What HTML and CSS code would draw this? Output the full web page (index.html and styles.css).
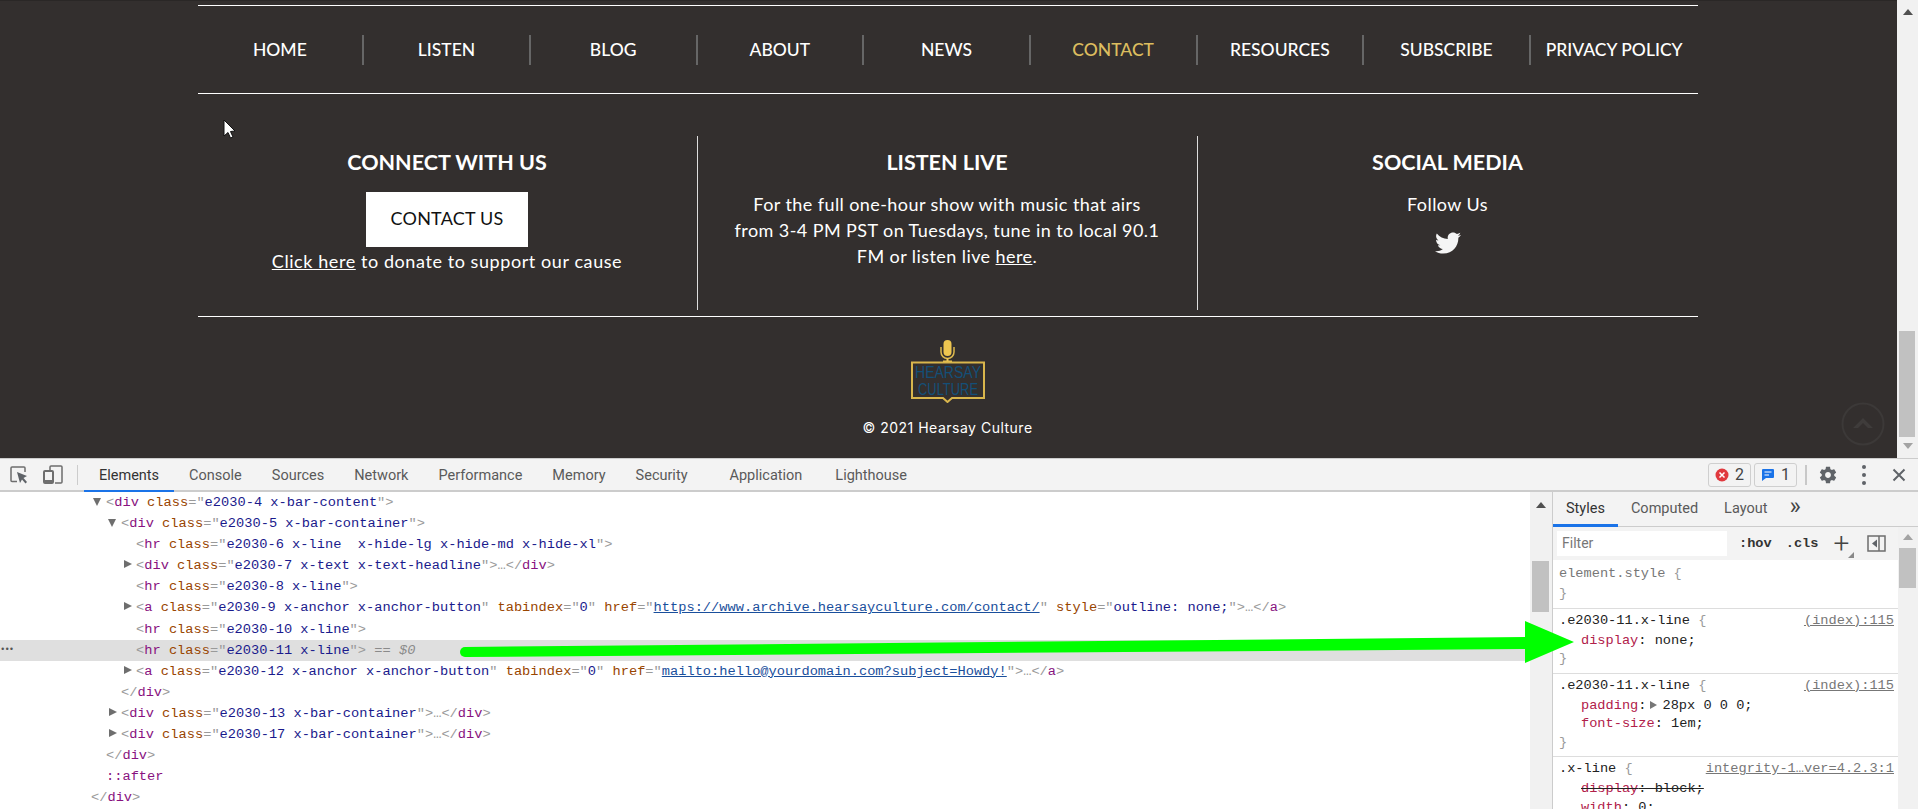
FILE: index.html
```html
<!DOCTYPE html>
<html lang="en">
<head>
    <meta charset="UTF-8">
    <meta name="viewport" content="width=device-width, initial-scale=1.0">
    <title>Hearsay Culture</title>
    <link rel="stylesheet" href="styles.css">
</head>
<body>

    <!-- Page viewport -->
    <div class="viewport">
        <div class="page">
            <footer class="footer">
                <nav class="nav">
                    <a class="nav-item">HOME</a>
                    <a class="nav-item">LISTEN</a>
                    <a class="nav-item">BLOG</a>
                    <a class="nav-item">ABOUT</a>
                    <a class="nav-item">NEWS</a>
                    <a class="nav-item active">CONTACT</a>
                    <a class="nav-item">RESOURCES</a>
                    <a class="nav-item">SUBSCRIBE</a>
                    <a class="nav-item">PRIVACY POLICY</a>
                </nav>

                <div class="columns">
                    <div class="column">
                        <h3>CONNECT WITH US</h3>
                        <a class="contact-btn">CONTACT US</a>
                        <p><u>Click here</u> to donate to support our cause</p>
                    </div>
                    <div class="column">
                        <h3>LISTEN LIVE</h3>
                        <p>For the full one-hour show with music that airs<br>from 3-4 PM PST on Tuesdays, tune in to local 90.1<br>FM or listen live <u>here</u>.</p>
                    </div>
                    <div class="column">
                        <h3>SOCIAL MEDIA</h3>
                        <p>Follow Us</p>
                        <svg class="twitter" viewBox="0 0 512 512"><path fill="#f5f5f5" d="M459.37 151.716c.325 4.548.325 9.097.325 13.645 0 138.72-105.583 298.558-298.558 298.558-59.452 0-114.68-17.219-161.137-47.106 8.447.974 16.568 1.299 25.34 1.299 49.055 0 94.213-16.568 130.274-44.832-46.132-.975-84.792-31.188-98.112-72.772 6.498.974 12.995 1.624 19.818 1.624 9.421 0 18.843-1.3 27.614-3.573-48.081-9.747-84.143-51.98-84.143-102.985v-1.299c13.969 7.797 30.214 12.67 47.431 13.319-28.264-18.843-46.781-51.005-46.781-87.391 0-19.492 5.197-37.36 14.294-52.954 51.655 63.675 129.3 105.258 216.365 109.807-1.624-7.797-2.599-15.918-2.599-24.04 0-57.828 46.782-104.934 104.934-104.934 30.213 0 57.502 12.67 76.67 33.137 23.715-4.548 46.456-13.32 66.599-25.34-7.798 24.366-24.366 44.833-46.132 57.827 21.117-2.273 41.584-8.122 60.426-16.243-14.292 20.791-32.161 39.308-52.628 54.253z"/></svg>
                    </div>
                </div>

                <div class="brand">
                    <svg class="logo" width="76" height="64" viewBox="0 0 76 64">
                        <rect x="33.500" y="1" width="8" height="16" rx="4" fill="#eec650"/>
                        <path d="M31 8 v5 a6.500 6.500 0 0 0 13 0 v-5" fill="none" stroke="#dcb84e" stroke-width="1.500"/>
                        <path d="M37.500 19 v3 M33 22.500 h9" stroke="#eec650" stroke-width="2"/>
                        <path d="M2 23.500 H74 V59 H42 L37.500 63 L33 59 H2 Z" fill="none" stroke="#d9b64c" stroke-width="2"/>
                        <text x="5" y="39" class="logo-text" textLength="66" lengthAdjust="spacingAndGlyphs">HEARSAY</text>
                        <text x="8" y="56" class="logo-text" textLength="60" lengthAdjust="spacingAndGlyphs">CULTURE</text>
                    </svg>
                    <div class="copyright">© 2021 Hearsay Culture</div>
                </div>
            </footer>
        </div>

        <div class="scrollbar page-scroll">
            <span class="arrow-up"></span>
            <span class="thumb"></span>
            <span class="arrow-down"></span>
        </div>

        <!-- Back to top button sits over the footer -->
        <svg class="back-top" width="44" height="44" viewBox="0 0 44 44">
            <circle cx="22" cy="22" r="20.500" fill="none" stroke="#3c3938" stroke-width="2"/>
            <path d="M12 26 L22 16 L32 26 L27 26 L22 21 L17 26 Z" fill="#3f3c3b"/>
        </svg>
    </div>

    <!-- Devtools -->
    <div class="devtools">
        <div class="toolbar">
            <svg class="tool-icon inspect" width="18" height="18" viewBox="0 0 18 18">
                <path d="M7 15.500 H2 a1 1 0 0 1 -1 -1 V2 a1 1 0 0 1 1 -1 H14 a1 1 0 0 1 1 1 V6" fill="none" stroke="#6e6e6e" stroke-width="1.500"/>
                <path d="M7 6 L17 10 L13.500 12 L17 16 L15.500 17.500 L12 13.500 L10 17 Z" fill="#5f6368"/>
            </svg>
            <svg class="tool-icon device" width="20" height="19" viewBox="0 0 20 19">
                <path d="M7 5 V2 a1 1 0 0 1 1 -1 H18 a1 1 0 0 1 1 1 V17 a1 1 0 0 1 -1 1 H12" fill="none" stroke="#6e6e6e" stroke-width="1.500"/>
                <rect x="1" y="6" width="9" height="12" rx="1" fill="none" stroke="#6e6e6e" stroke-width="2"/>
                <rect x="1" y="15" width="9" height="3" fill="#6e6e6e"/>
            </svg>
            <span class="tool-sep"></span>
            <div class="tabs">
                <a class="tab selected">Elements</a>
                <a class="tab">Console</a>
                <a class="tab">Sources</a>
                <a class="tab">Network</a>
                <a class="tab">Performance</a>
                <a class="tab">Memory</a>
                <a class="tab">Security</a>
                <a class="tab tab-app">Application</a>
                <a class="tab tab-last">Lighthouse</a>
            </div>
            <div class="tool-right">
                <span class="badge">
                    <svg width="14" height="14" viewBox="0 0 14 14"><circle cx="7" cy="7" r="6.500" fill="#e0393e"/><path d="M4.500 4.500 L9.500 9.500 M9.500 4.500 L4.500 9.500" stroke="#fff" stroke-width="1.500"/></svg>
                    2
                </span>
                <span class="badge">
                    <svg width="14" height="14" viewBox="0 0 14 14"><path d="M1 2 a1 1 0 0 1 1 -1 H12 a1 1 0 0 1 1 1 V9 a1 1 0 0 1 -1 1 H5 L1 13 Z" fill="#1a73e8"/><path d="M3.500 4 H10.500 M3.500 7 H8" stroke="#fff" stroke-width="1.200"/></svg>
                    1
                </span>
                <span class="tool-sep right-sep"></span>
                <svg class="gear" width="20" height="20" viewBox="0 0 24 24"><path fill="#5f6368" d="M19.430 12.980c.040-.320.070-.640.070-.980s-.030-.660-.070-.980l2.110-1.650c.190-.150.240-.420.120-.640l-2-3.460c-.120-.220-.390-.300-.610-.220l-2.490 1c-.520-.400-1.080-.730-1.690-.980l-.380-2.650C14.460 2.180 14.250 2 14 2h-4c-.250 0-.460.180-.490.420l-.380 2.650c-.610.250-1.170.590-1.690.980l-2.490-1c-.230-.090-.490 0-.610.220l-2 3.460c-.130.220-.070.490.120.640l2.110 1.650c-.040.320-.070.650-.070.980s.030.660.070.980l-2.110 1.650c-.190.150-.240.420-.120.640l2 3.460c.120.220.390.300.610.220l2.490-1c.520.400 1.080.730 1.690.980l.380 2.650c.030.240.240.420.490.420h4c.250 0 .460-.180.490-.420l.380-2.650c.610-.250 1.170-.590 1.690-.980l2.490 1c.230.090.490 0 .610-.220l2-3.460c.120-.220.070-.490-.120-.640l-2.110-1.650zM12 15.500c-1.930 0-3.500-1.570-3.500-3.500s1.570-3.500 3.500-3.500 3.500 1.570 3.500 3.500-1.570 3.500-3.500 3.500z"/></svg>
                <span class="dots"><i></i><i></i><i></i></span>
                <svg class="close" width="14" height="14" viewBox="0 0 14 14"><path d="M1.500 1.500 L12.500 12.500 M12.500 1.500 L1.500 12.500" stroke="#5f6368" stroke-width="2"/></svg>
            </div>
        </div>

        <div class="panes">
            <div class="tree">
                <div class="row l1 open"><span class="p">&lt;</span><span class="t">div</span> <span class="n">class</span><span class="p">="</span><span class="v">e2030-4 x-bar-content</span><span class="p">"&gt;</span></div>
                <div class="row l2 open"><span class="p">&lt;</span><span class="t">div</span> <span class="n">class</span><span class="p">="</span><span class="v">e2030-5 x-bar-container</span><span class="p">"&gt;</span></div>
                <div class="row l3"><span class="p">&lt;</span><span class="t">hr</span> <span class="n">class</span><span class="p">="</span><span class="v">e2030-6 x-line  x-hide-lg x-hide-md x-hide-xl</span><span class="p">"&gt;</span></div>
                <div class="row l3 closed"><span class="p">&lt;</span><span class="t">div</span> <span class="n">class</span><span class="p">="</span><span class="v">e2030-7 x-text x-text-headline</span><span class="p">"&gt;…&lt;/</span><span class="t">div</span><span class="p">&gt;</span></div>
                <div class="row l3"><span class="p">&lt;</span><span class="t">hr</span> <span class="n">class</span><span class="p">="</span><span class="v">e2030-8 x-line</span><span class="p">"&gt;</span></div>
                <div class="row l3 closed"><span class="p">&lt;</span><span class="t">a</span> <span class="n">class</span><span class="p">="</span><span class="v">e2030-9 x-anchor x-anchor-button</span><span class="p">"</span> <span class="n">tabindex</span><span class="p">="</span><span class="v">0</span><span class="p">"</span> <span class="n">href</span><span class="p">="</span><span class="link">https://www.archive.hearsayculture.com/contact/</span><span class="p">"</span> <span class="n">style</span><span class="p">="</span><span class="v">outline: none;</span><span class="p">"&gt;…&lt;/</span><span class="t">a</span><span class="p">&gt;</span></div>
                <div class="row l3"><span class="p">&lt;</span><span class="t">hr</span> <span class="n">class</span><span class="p">="</span><span class="v">e2030-10 x-line</span><span class="p">"&gt;</span></div>
                <div class="row l3 current"><span class="more">•••</span><span class="p">&lt;</span><span class="t">hr</span> <span class="n">class</span><span class="p">="</span><span class="v">e2030-11 x-line</span><span class="p">"&gt;</span> <span class="eq">==</span> <em class="eq">$0</em></div>
                <div class="row l3 closed"><span class="p">&lt;</span><span class="t">a</span> <span class="n">class</span><span class="p">="</span><span class="v">e2030-12 x-anchor x-anchor-button</span><span class="p">"</span> <span class="n">tabindex</span><span class="p">="</span><span class="v">0</span><span class="p">"</span> <span class="n">href</span><span class="p">="</span><span class="link">mailto:hello@yourdomain.com?subject=Howdy!</span><span class="p">"&gt;…&lt;/</span><span class="t">a</span><span class="p">&gt;</span></div>
                <div class="row l2"><span class="p">&lt;/</span><span class="t">div</span><span class="p">&gt;</span></div>
                <div class="row l2 closed"><span class="p">&lt;</span><span class="t">div</span> <span class="n">class</span><span class="p">="</span><span class="v">e2030-13 x-bar-container</span><span class="p">"&gt;…&lt;/</span><span class="t">div</span><span class="p">&gt;</span></div>
                <div class="row l2 closed"><span class="p">&lt;</span><span class="t">div</span> <span class="n">class</span><span class="p">="</span><span class="v">e2030-17 x-bar-container</span><span class="p">"&gt;…&lt;/</span><span class="t">div</span><span class="p">&gt;</span></div>
                <div class="row l1"><span class="p">&lt;/</span><span class="t">div</span><span class="p">&gt;</span></div>
                <div class="row l1"><span class="t">::after</span></div>
                <div class="row l0"><span class="p">&lt;/</span><span class="t">div</span><span class="p">&gt;</span></div>
            </div>

            <div class="scrollbar tree-scroll">
                <span class="arrow-up"></span>
                <span class="thumb"></span>
            </div>

            <div class="sidebar">
                <div class="side-tabs">
                    <a class="side-tab selected">Styles</a>
                    <a class="side-tab">Computed</a>
                    <a class="side-tab">Layout</a>
                    <span class="side-more">»</span>
                </div>
                <div class="side-body">
                    <div class="side-main">
                        <div class="filter-row">
                            <span class="filter">Filter</span>
                            <b class="mono-btn">:hov</b>
                            <b class="mono-btn">.cls</b>
                            <span class="plus">+</span>
                            <svg class="toggle" width="19" height="17" viewBox="0 0 19 17"><rect x="1" y="1" width="17" height="15" fill="none" stroke="#6e6e6e" stroke-width="1.500"/><path d="M12 1 V16" stroke="#6e6e6e" stroke-width="1.500"/><path d="M10 4.500 V12.500 L5 8.500 Z" fill="#5f6368"/></svg>
                        </div>
                        <div class="rule first">
                            <div class="sel"><span class="dim">element.style</span> <span class="p">{</span></div>
                            <div class="line end"><span class="p">}</span></div>
                        </div>
                        <div class="rule">
                            <div class="sel">.e2030-11.x-line <span class="p">{</span><a class="src">(index):115</a></div>
                            <div class="line"><span class="prop">display</span>: none;</div>
                            <div class="line end"><span class="p">}</span></div>
                        </div>
                        <div class="rule">
                            <div class="sel">.e2030-11.x-line <span class="p">{</span><a class="src">(index):115</a></div>
                            <div class="line"><span class="prop">padding</span>:<span class="mini"></span>28px 0 0 0;</div>
                            <div class="line"><span class="prop">font-size</span>: 1em;</div>
                            <div class="line end"><span class="p">}</span></div>
                        </div>
                        <div class="rule">
                            <div class="sel">.x-line <span class="p">{</span><a class="src">integrity-1…ver=4.2.3:1</a></div>
                            <div class="line"><s><span class="prop">display</span>: block;</s></div>
                            <div class="line"><span class="prop">width</span>: 0;</div>
                        </div>
                    </div>
                    <div class="scrollbar side-scroll">
                        <span class="arrow-up"></span>
                        <span class="thumb"></span>
                    </div>
                </div>
            </div>
        </div>
    </div>

    <!-- Annotation and mouse pointer on top of the screenshot -->
    <svg class="annotation" width="1918" height="809" viewBox="0 0 1918 809">
        <circle cx="465" cy="652" r="5" fill="#00ff00"/>
        <polygon fill="#00ff00" points="465,647 1525,637 1525,621 1574,642 1525,663 1525,649 465,657"/>
        <path d="M224 120 L224 136 L228 132.500 L230.500 138 L233 137 L230.500 131.500 L235 131 Z" fill="#fff" stroke="#111" stroke-width="1"/>
    </svg>

</body>
</html>
```

FILE: styles.css
```css
body {
    margin: 0;
    height: 809px;
    overflow: hidden;
    position: relative;
    font-family: Lato, sans-serif;
    background-color: #fff;
}

/* Page area above the devtools */
.viewport {
    display: flex;
    height: 458px;
    position: relative;
}

.page {
    flex: 1;
    background-color: #332f2e;
    border-top: 1px solid #2a2726;
    box-sizing: border-box;
    overflow: hidden;
}

.footer {
    width: 1500px;
    margin: 0 auto;
    padding-top: 4px;
    color: #fff;
    position: relative;
    left: -1px;
}

.nav {
    display: grid;
    grid-template-columns: repeat(9, 1fr);
    height: 87px;
    align-items: center;
    border-top: 1px solid #fff;
    border-bottom: 1px solid #fff;
}

.nav-item {
    height: 30px;
    line-height: 30px;
    text-align: center;
    font-size: 17.5px;
    font-weight: 500;
    border-right: 2px solid #666;
}

.nav-item:last-child {
    border-right: none;
}

.nav-item.active {
    color: #dcbd5f;
}

.columns {
    display: grid;
    grid-template-columns: repeat(3, 1fr);
    margin-top: 42px;
    height: 174px;
}

.column {
    display: flex;
    flex-direction: column;
    align-items: center;
    text-align: center;
    border-right: 1px solid #ddd;
}

.column:last-child {
    border-right: none;
}

.column h3 {
    margin: 14px 0 0;
    font-size: 21.5px;
    line-height: 25px;
    font-weight: 700;
}

.column p {
    margin: 16px 0 0;
    font-size: 18px;
    line-height: 26px;
    letter-spacing: 0.42px;
}

.contact-btn {
    display: block;
    width: 162px;
    height: 55px;
    line-height: 53px;
    margin-top: 17px;
    background-color: #fff;
    color: #111;
    font-size: 18px;
    letter-spacing: 0.2px;
    text-align: center;
}

.column .contact-btn + p {
    margin-top: 1px;
    letter-spacing: 0.58px;
}

.twitter {
    width: 26px;
    height: 26px;
    margin-top: 13px;
}

.brand {
    border-top: 1px solid #fff;
    margin-top: 6px;
    display: flex;
    flex-direction: column;
    align-items: center;
}

.logo {
    margin-top: 22px;
}

.logo-text {
    font-family: "Liberation Sans", sans-serif;
    font-size: 16px;
    fill: #134f78;
}

.copyright {
    font-family: Inter, sans-serif;
    font-size: 14px;
    letter-spacing: 0.5px;
    line-height: 18px;
    margin-top: 16px;
}

.back-top {
    position: absolute;
    left: 1841px;
    top: 402px;
}

/* Scrollbars */
.scrollbar {
    background-color: #f1f1f1;
    position: relative;
    box-sizing: border-box;
}

.scrollbar .thumb {
    position: absolute;
    background-color: #c1c1c1;
    left: 2px;
    right: 3px;
}

.arrow-up, .arrow-down {
    position: absolute;
    left: 50%;
    margin-left: -5px;
    width: 0;
    height: 0;
    border-left: 5px solid transparent;
    border-right: 5px solid transparent;
}

.arrow-up {
    border-bottom: 6px solid #505050;
}

.arrow-down {
    border-top: 6px solid #a3a3a3;
    bottom: 9px;
}

.page-scroll {
    width: 21px;
}

.page-scroll .arrow-up {
    top: 9px;
}

.page-scroll .thumb {
    top: 331px;
    height: 106px;
}

/* Devtools */
.devtools {
    height: 351px;
    display: flex;
    flex-direction: column;
}

.toolbar {
    height: 34px;
    box-sizing: border-box;
    display: flex;
    align-items: center;
    background-color: #f3f3f3;
    border-top: 1px solid #ccc;
    border-bottom: 2px solid #ccc;
    font-family: Roboto, sans-serif;
    font-size: 14.5px;
    color: #5a5a5a;
}

.tool-icon.inspect {
    margin-left: 10px;
}

.tool-icon.device {
    margin-left: 15px;
}

.tool-sep {
    width: 1px;
    height: 20px;
    background-color: #ccc;
    margin-left: 14px;
}

.tabs {
    display: flex;
    margin-left: 6px;
    height: 32px;
    margin-bottom: -2px;
}

.tab {
    padding: 0 15px;
    line-height: 32px;
    box-sizing: border-box;
}

.tab.selected {
    color: #333;
    border-bottom: 2px solid #1a73e8;
}

.tab-app {
    margin-left: 12px;
}

.tab-last {
    margin-left: 3px;
}

.tool-right {
    margin-left: auto;
    display: flex;
    align-items: center;
    font-size: 16px;
}

.badge {
    display: flex;
    align-items: center;
    justify-content: center;
    gap: 6px;
    width: 43px;
    height: 24px;
    box-sizing: border-box;
    border: 1px solid #cfcfcf;
    border-radius: 3px;
    margin-right: 3px;
    color: #444;
}

.right-sep {
    margin: 0 11px 0 5px;
    width: 2px;
    background-color: #c8c8c8;
}

.dots {
    display: flex;
    flex-direction: column;
    gap: 4px;
    margin: 0 26px 0 24px;
}

.dots i {
    width: 4px;
    height: 4px;
    border-radius: 50%;
    background-color: #5f6368;
}

.close {
    margin-right: 12px;
}

.panes {
    flex: 1;
    display: flex;
    min-height: 0;
}

/* Elements tree */
.tree {
    width: 1530px;
    font-family: "Liberation Mono", monospace;
    font-size: 13.7px;
    overflow: hidden;
}

.row {
    height: 21.1px;
    line-height: 21.1px;
    white-space: pre;
    position: relative;
}

.row.l0 { padding-left: 91px; }
.row.l1 { padding-left: 106px; }
.row.l2 { padding-left: 121px; }
.row.l3 { padding-left: 136px; }

.row.open::before, .row.closed::before {
    content: "";
    position: absolute;
    width: 0;
    height: 0;
}

.row.open::before {
    margin-left: -13px;
    margin-top: 6px;
    border-left: 4.5px solid transparent;
    border-right: 4.5px solid transparent;
    border-top: 8px solid #6e6e6e;
}

.row.closed::before {
    margin-left: -12px;
    margin-top: 5px;
    border-top: 4.5px solid transparent;
    border-bottom: 4.5px solid transparent;
    border-left: 8px solid #6e6e6e;
}

.row.current {
    background-color: #dfdfdf;
}

.more {
    position: absolute;
    left: 0;
    font-size: 9px;
    letter-spacing: -1px;
    color: #555;
}

.p { color: #9a9a9a; }
.t { color: #881280; }
.n { color: #994500; }
.v { color: #1a1a8c; }
.link { color: #1a4f9c; text-decoration: underline; }
.eq { color: #8a8a8a; }

.tree-scroll {
    width: 23px;
    border-right: 1px solid #ccc;
}

.tree-scroll .arrow-up {
    top: 10px;
}

.tree-scroll .thumb {
    top: 69px;
    height: 51px;
}

/* Styles sidebar */
.sidebar {
    flex: 1;
    display: flex;
    flex-direction: column;
    min-width: 0;
}

.side-tabs {
    height: 35px;
    box-sizing: border-box;
    display: flex;
    background-color: #f3f3f3;
    border-bottom: 1px solid #ccc;
    font-family: Roboto, sans-serif;
    font-size: 14.5px;
    color: #5a5a5a;
}

.side-tab {
    padding: 0 13px;
    line-height: 34px;
    height: 35px;
    box-sizing: border-box;
}

.side-tab.selected {
    color: #333;
    border-bottom: 3px solid #1a73e8;
}

.side-more {
    font-size: 24px;
    line-height: 28px;
    margin-left: 9px;
    color: #444;
}

.side-body {
    flex: 1;
    display: flex;
    min-height: 0;
}

.side-main {
    flex: 1;
    min-width: 0;
    overflow: hidden;
    font-family: "Liberation Mono", monospace;
    font-size: 13.65px;
}

.filter-row {
    height: 33px;
    box-sizing: border-box;
    background-color: #f3f3f3;
    display: flex;
    align-items: center;
    padding-left: 4px;
    color: #333;
}

.filter {
    width: 165px;
    height: 25px;
    padding-left: 5px;
    line-height: 25px;
    background-color: #fff;
    font-family: Roboto, sans-serif;
    font-size: 14px;
    color: #777;
}

.mono-btn {
    margin-left: 12px;
    font-weight: 700;
}

.mono-btn + .mono-btn {
    margin-left: 14px;
}

.plus {
    font-family: Roboto, sans-serif;
    font-size: 28px;
    font-weight: 300;
    line-height: 28px;
    margin-left: 15px;
    color: #444;
    position: relative;
}

/* little corner mark on the new rule button */
.plus::after {
    content: "";
    position: absolute;
    right: -5px;
    bottom: 0;
    border-left: 6px solid transparent;
    border-bottom: 6px solid #888;
}

.toggle {
    margin-left: 18px;
}

.rule {
    padding: 1px 4px 4px 6px;
    border-bottom: 1px solid #ddd;
    color: #222;
}

.rule.first {
    padding-top: 3px;
}

.sel {
    line-height: 21px;
    margin-bottom: 1px;
}

.dim {
    color: #777;
}

.src {
    float: right;
    color: #777;
    text-decoration: underline;
}

.line {
    line-height: 18.5px;
    padding-left: 22px;
}

.line.end {
    padding-left: 0;
}

.prop {
    color: #b1204a;
}

.mini {
    display: inline-block;
    margin: 0 6px 0 3px;
    border-top: 4px solid transparent;
    border-bottom: 4px solid transparent;
    border-left: 7px solid #777;
}

.side-scroll {
    width: 20px;
}

.side-scroll .arrow-up {
    top: 7px;
    border-bottom-color: #a3a3a3;
}

.side-scroll .thumb {
    top: 21px;
    height: 40px;
    left: 1px;
    right: 2px;
}

/* Green arrow and mouse pointer */
.annotation {
    position: absolute;
    left: 0;
    top: 0;
    pointer-events: none;
}
```
